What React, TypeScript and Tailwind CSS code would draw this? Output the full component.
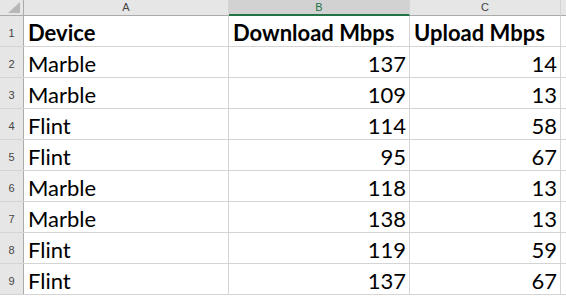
import React from 'react'

const rows = [
  { device: 'Marble', down: 137, up: 14 },
  { device: 'Marble', down: 109, up: 13 },
  { device: 'Flint', down: 114, up: 58 },
  { device: 'Flint', down: 95, up: 67 },
  { device: 'Marble', down: 118, up: 13 },
  { device: 'Marble', down: 138, up: 13 },
  { device: 'Flint', down: 119, up: 59 },
  { device: 'Flint', down: 137, up: 67 },
]

const cellFont = { fontFamily: 'Lato, "Open Sans", sans-serif' }
const headFont = { fontFamily: '"Liberation Sans", Arial, sans-serif' }

function RowHead({ n }: { n: number }) {
  return (
    <div
      className="w-[24px] shrink-0 bg-[#e6e6e6] border-r border-[#ababab] flex items-end justify-center pb-[7px] text-[11px] leading-none text-[#444]"
      style={headFont}
    >
      {n}
    </div>
  )
}

export default function App() {
  return (
    <div className="w-[566px] h-[297px] overflow-hidden bg-white">
      {/* column headers */}
      <div className="flex h-[16px]" style={headFont}>
        <div className="relative w-[24px] shrink-0 bg-[#e6e6e6] border-r border-b border-[#ababab]">
          <div className="absolute left-[8px] top-[2px] w-0 h-0 border-l-[12px] border-l-transparent border-b-[11px] border-b-[#b7b7b7]" />
        </div>
        <div className="w-[205px] shrink-0 bg-[#e6e6e6] border-r border-b border-r-[#d4d4d4] border-b-[#ababab] flex items-center justify-center text-[11px] text-[#444]">
          A
        </div>
        <div className="w-[181px] shrink-0 bg-[#d2d2d2] border-r border-b-2 border-r-[#d4d4d4] border-b-[#217346] flex items-center justify-center text-[11px] text-[#217346]">
          B
        </div>
        <div className="w-[151px] shrink-0 bg-[#e6e6e6] border-r border-b border-r-[#d4d4d4] border-b-[#ababab] flex items-center justify-center text-[11px] text-[#444]">
          C
        </div>
        <div className="flex-1 bg-[#e6e6e6] border-b border-[#ababab]" />
      </div>

      {/* header row */}
      <div className="flex h-[31px] border-b border-[#d4d4d4]">
        <RowHead n={1} />
        <div className="w-[205px] shrink-0 border-r border-[#d4d4d4] flex items-end pl-[4px] pb-[2px] text-[22px] leading-none font-bold text-black" style={cellFont}>
          Device
        </div>
        <div className="w-[181px] shrink-0 border-r border-[#d4d4d4] flex items-end pl-[4px] pb-[2px] text-[22px] leading-none font-bold text-black whitespace-nowrap" style={cellFont}>
          Download Mbps
        </div>
        <div className="w-[151px] shrink-0 border-r border-[#d4d4d4] flex items-end pl-[4px] pb-[2px] text-[22px] leading-none font-bold text-black whitespace-nowrap" style={cellFont}>
          Upload Mbps
        </div>
        <div className="flex-1" />
      </div>

      {rows.map((r, i) => (
        <div key={i} className="flex h-[31px] border-b border-[#d4d4d4]">
          <RowHead n={i + 2} />
          <div className="w-[205px] shrink-0 border-r border-[#d4d4d4] flex items-end pl-[4px] pb-[2px] text-[22px] leading-none text-black" style={cellFont}>
            {r.device}
          </div>
          <div className="w-[181px] shrink-0 border-r border-[#d4d4d4] flex items-end justify-end pr-[3px] pb-[2px] text-[22px] leading-none text-black" style={cellFont}>
            {r.down}
          </div>
          <div className="w-[151px] shrink-0 border-r border-[#d4d4d4] flex items-end justify-end pr-[3px] pb-[2px] text-[22px] leading-none text-black" style={cellFont}>
            {r.up}
          </div>
          <div className="flex-1" />
        </div>
      ))}
    </div>
  )
}
